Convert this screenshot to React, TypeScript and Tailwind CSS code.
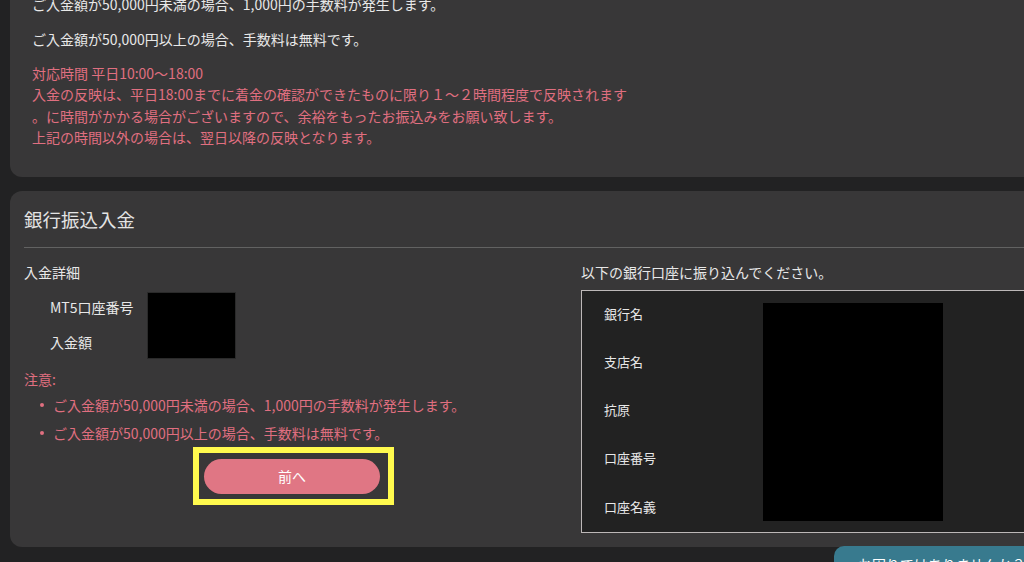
export default function App() {
  const pink = "text-[#e06f80]";
  return (
    <div className="relative w-[1024px] h-[562px] overflow-hidden bg-[#222223] text-[14px] font-['Noto_Sans_CJK_JP',sans-serif] text-[#e8e8e8]">
      {/* Top card */}
      <div className="ml-[10px] w-[1040px] -mt-[30px] pt-[23.5px] pb-[28px] pl-[22px] bg-[#383738] rounded-[12px]">
        <p className="leading-[21px]">ご入金額が50,000円未満の場合、1,000円の手数料が発生します。</p>
        <p className="mt-[14px] leading-[21px]">ご入金額が50,000円以上の場合、手数料は無料です。</p>
        <div className={`mt-[13px] leading-[21.5px] ${pink}`}>
          <div>対応時間 平日10:00～18:00</div>
          <div>入金の反映は、平日18:00までに着金の確認ができたものに限り１～２時間程度で反映されます</div>
          <div>。に時間がかかる場合がございますので、余裕をもったお振込みをお願い致します。</div>
          <div>上記の時間以外の場合は、翌日以降の反映となります。</div>
        </div>
      </div>

      {/* Bank transfer card */}
      <div className="ml-[10px] w-[1040px] mt-[14px] h-[356px] bg-[#383738] rounded-[12px] pt-[15px] pl-[14px]">
        <h2 className="text-[18.5px] leading-[26px] text-[#e4e4e4]">銀行振込入金</h2>
        <div className="mt-[15px] h-px bg-[#626262]" />
        <div className="mt-[14px] flex">
          {/* Left column */}
          <div className="w-[557px] shrink-0">
            <div className="leading-[20px]">入金詳細</div>
            <div className="mt-[8.5px] grid grid-cols-[97px_89px] grid-rows-[35px_35px] pl-[26px]">
              <div className="flex items-center">MT5口座番号</div>
              <div className="row-span-2 my-[1.5px] bg-black border border-[#2a2a2a]" />
              <div className="flex items-center">入金額</div>
            </div>
            <div className={`mt-[8.5px] leading-[20px] ${pink}`}>注意:</div>
            <ul className={`mt-[6px] ${pink}`}>
              <li className="flex items-center leading-[20px] pl-[16px]">
                <span className="w-[4px] h-[4px] rounded-full bg-[#e06f80] mr-[9px]" />
                ご入金額が50,000円未満の場合、1,000円の手数料が発生します。
              </li>
              <li className="mt-[8px] flex items-center leading-[20px] pl-[16px]">
                <span className="w-[4px] h-[4px] rounded-full bg-[#e06f80] mr-[9px]" />
                ご入金額が50,000円以上の場合、手数料は無料です。
              </li>
            </ul>
            <div className="mt-[4px] ml-[169px] w-[201px] h-[58px] border-[6px] border-[#fffa4e] pl-[5px] pt-[6px]">
              <button className="w-[176px] h-[35px] rounded-full bg-[#e07684] text-white text-[14px] leading-[20px] flex items-center justify-center">
                前へ
              </button>
            </div>
          </div>

          {/* Right column */}
          <div className="flex-1">
            <div className="leading-[20px]">以下の銀行口座に振り込んでください。</div>
            <div className="mt-[8px] h-[243px] border border-[#bdb8b8] bg-[#222222] text-[13px]">
              <div className="grid grid-cols-[181px_180px] grid-rows-[repeat(5,48.2px)]">
                <div className="flex items-center pl-[22px] pb-[2px]">銀行名</div>
                <div className="row-start-1 col-start-2 row-span-5 mt-[12px] mb-[10px] bg-black" />
                <div className="flex items-center pl-[22px] pb-[2px]">支店名</div>
                <div className="flex items-center pl-[22px] pb-[2px]">抗原</div>
                <div className="flex items-center pl-[22px] pb-[2px]">口座番号</div>
                <div className="flex items-center pl-[22px] pb-[2px]">口座名義</div>
              </div>
            </div>
          </div>
        </div>
      </div>

      {/* Help tab */}
      <div className="absolute left-[834px] top-[546px] w-[210px] h-[40px] bg-[#387a8e] rounded-tl-[10px] rounded-tr-[10px] text-white pl-[24px] pt-[8px] leading-[20px] text-[14px]">
        お困りではありませんか？
      </div>
    </div>
  );
}
